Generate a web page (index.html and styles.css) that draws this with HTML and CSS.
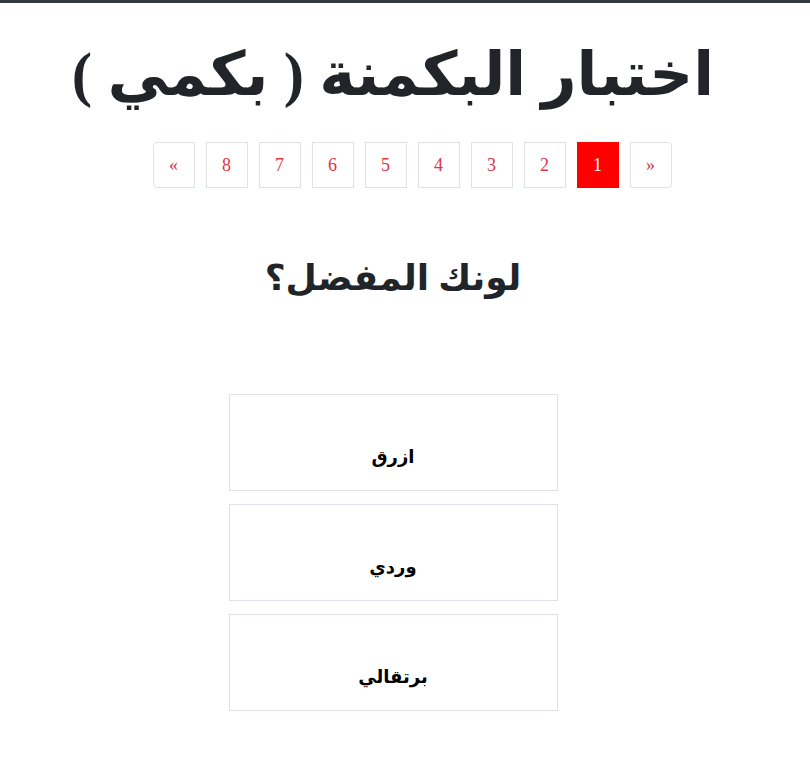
FILE: index.html
```html
<!DOCTYPE html>
<html lang="ar" dir="rtl">
<head>
<meta charset="utf-8">
<title>اختبار البكمنة</title>
<link rel="stylesheet" href="styles.css">
</head>
<body>
<div class="topbar"></div>
<main class="page">
  <h1 class="title">اختبار البكمنة ( بكمي )</h1>
  <ul class="pager">
    <li><a class="pg edge-r" href="#">«</a></li>
    <li><a class="pg active" href="#">1</a></li>
    <li><a class="pg" href="#">2</a></li>
    <li><a class="pg" href="#">3</a></li>
    <li><a class="pg" href="#">4</a></li>
    <li><a class="pg" href="#">5</a></li>
    <li><a class="pg" href="#">6</a></li>
    <li><a class="pg" href="#">7</a></li>
    <li><a class="pg" href="#">8</a></li>
    <li><a class="pg edge-l" href="#">»</a></li>
  </ul>
  <h2 class="question">لونك المفضل؟</h2>
  <div class="answers">
    <div class="answer">ازرق</div>
    <div class="answer">وردي</div>
    <div class="answer">برتقالي</div>
  </div>
</main>
</body>
</html>
```
FILE: styles.css
```css
html, body {
  margin: 0;
  padding: 0;
  background: #fff;
}
body {
  font-family: "Liberation Serif", "DejaVu Sans", serif;
  color: #212529;
}
.topbar {
  height: 3px;
  background: #343a40;
}
.page {
  padding: 0 24px 0 0;
  display: flex;
  flex-direction: column;
  align-items: center;
}
.title {
  margin: 35px 0 0;
  font-size: 61px;
  font-weight: bold;
  line-height: 1.2;
  color: #212529;
  text-align: center;
}
.pager {
  list-style: none;
  display: flex;
  gap: 11px;
  margin: 31px 0 0;
  padding: 0 0 0 38px;
  direction: rtl;
}
.pager li {
  display: block;
}
.pg {
  display: flex;
  align-items: center;
  justify-content: center;
  box-sizing: border-box;
  width: 42px;
  height: 46px;
  border: 1px solid #dee2e6;
  color: #dc3545;
  text-decoration: none;
  font-family: "Liberation Serif", serif;
  font-size: 18px;
}
.pg.active {
  background: #ff0000;
  border-color: #ff0000;
  color: #fff;
}
.edge-r {
  border-radius: 0 4px 4px 0;
}
.edge-l {
  border-radius: 4px 0 0 4px;
}
.question {
  margin: 69px 0 0;
  font-size: 36px;
  font-weight: bold;
  line-height: 1.2;
  color: #212529;
}
.answers {
  margin-top: 94px;
  display: flex;
  flex-direction: column;
  gap: 13px;
}
.answer {
  box-sizing: border-box;
  width: 329px;
  height: 97px;
  border: 1px solid #dee2e6;
  padding-top: 51px;
  text-align: center;
  font-family: "DejaVu Sans", sans-serif;
  font-size: 18px;
  font-weight: bold;
  color: #000;
}
```
